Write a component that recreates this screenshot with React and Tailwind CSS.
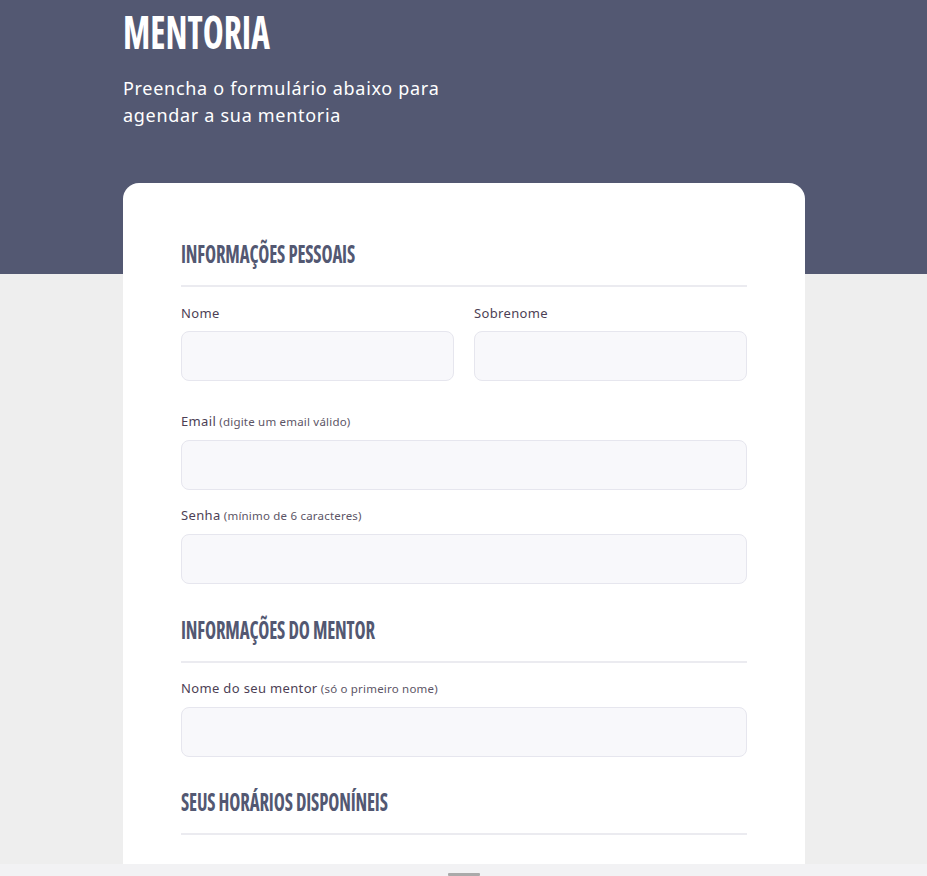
import React from "react";

function Section({ title }) {
  return (
    <div className="border-b-2 border-[#ebebf0] pb-[16px]">
      <h2 className="inline-block origin-left scale-x-[0.75] whitespace-nowrap font-['Open_Sans'] font-stretch-condensed text-[25px] leading-[30px] font-bold uppercase text-[#535872] tracking-[-0.2px]">
        {title}
      </h2>
    </div>
  );
}

function Field({ label, hint, className = "" }) {
  return (
    <div className={className}>
      <label className="block text-[13px] leading-[20px] tracking-[0.35px] text-[#4d3f55]">
        {label}
        {hint && <span className="text-[11.5px] tracking-[0.2px] text-[#5c5566]"> {hint}</span>}
      </label>
      <div className="mt-[8px] h-[50px] rounded-[8px] border border-[#e6e6ee] bg-[#f8f8fb]" />
    </div>
  );
}

export default function App() {
  return (
    <div className="relative min-h-[876px] bg-[#eeeeee] font-['Noto_Sans','Open_Sans',sans-serif]">
      <header className="h-[274px] bg-[#535872]">
        <div className="ml-[123px]">
          <h1 className="inline-block origin-left scale-x-[0.77] whitespace-nowrap font-['Open_Sans'] font-stretch-condensed text-[46px] leading-[63px] font-bold text-white">
            MENTORIA
          </h1>
          <p className="mt-[12px] w-[340px] text-[18px] leading-[27px] tracking-[0.7px] text-white">
            Preencha o formulário abaixo para agendar a sua mentoria
          </p>
        </div>
      </header>
      <main className="-mt-[91px] ml-[123px] w-[682px] min-h-[693px] rounded-t-[16px] bg-white px-[58px] pt-[55px] pb-[10px]">
        <Section title="Informações Pessoais" />
        <div className="mt-[16px] grid grid-cols-2 gap-x-[20px]">
          <Field label="Nome" />
          <Field label="Sobrenome" />
        </div>
        <Field className="mt-[30px]" label="Email" hint="(digite um email válido)" />
        <Field className="mt-[15px]" label="Senha" hint="(mínimo de 6 caracteres)" />
        <div className="mt-[30px]">
          <Section title="Informações do Mentor" />
        </div>
        <Field className="mt-[15px]" label="Nome do seu mentor" hint="(só o primeiro nome)" />
        <div className="mt-[29px]">
          <Section title="Seus Horários Disponíneis" />
        </div>
      </main>
      <div className="fixed bottom-0 left-0 right-0 flex h-[12px] items-end justify-center bg-[#f2f2f4]">
        <div className="h-[3px] w-[32px] rounded-[1px] bg-[#aaaaaa]" />
      </div>
    </div>
  );
}
